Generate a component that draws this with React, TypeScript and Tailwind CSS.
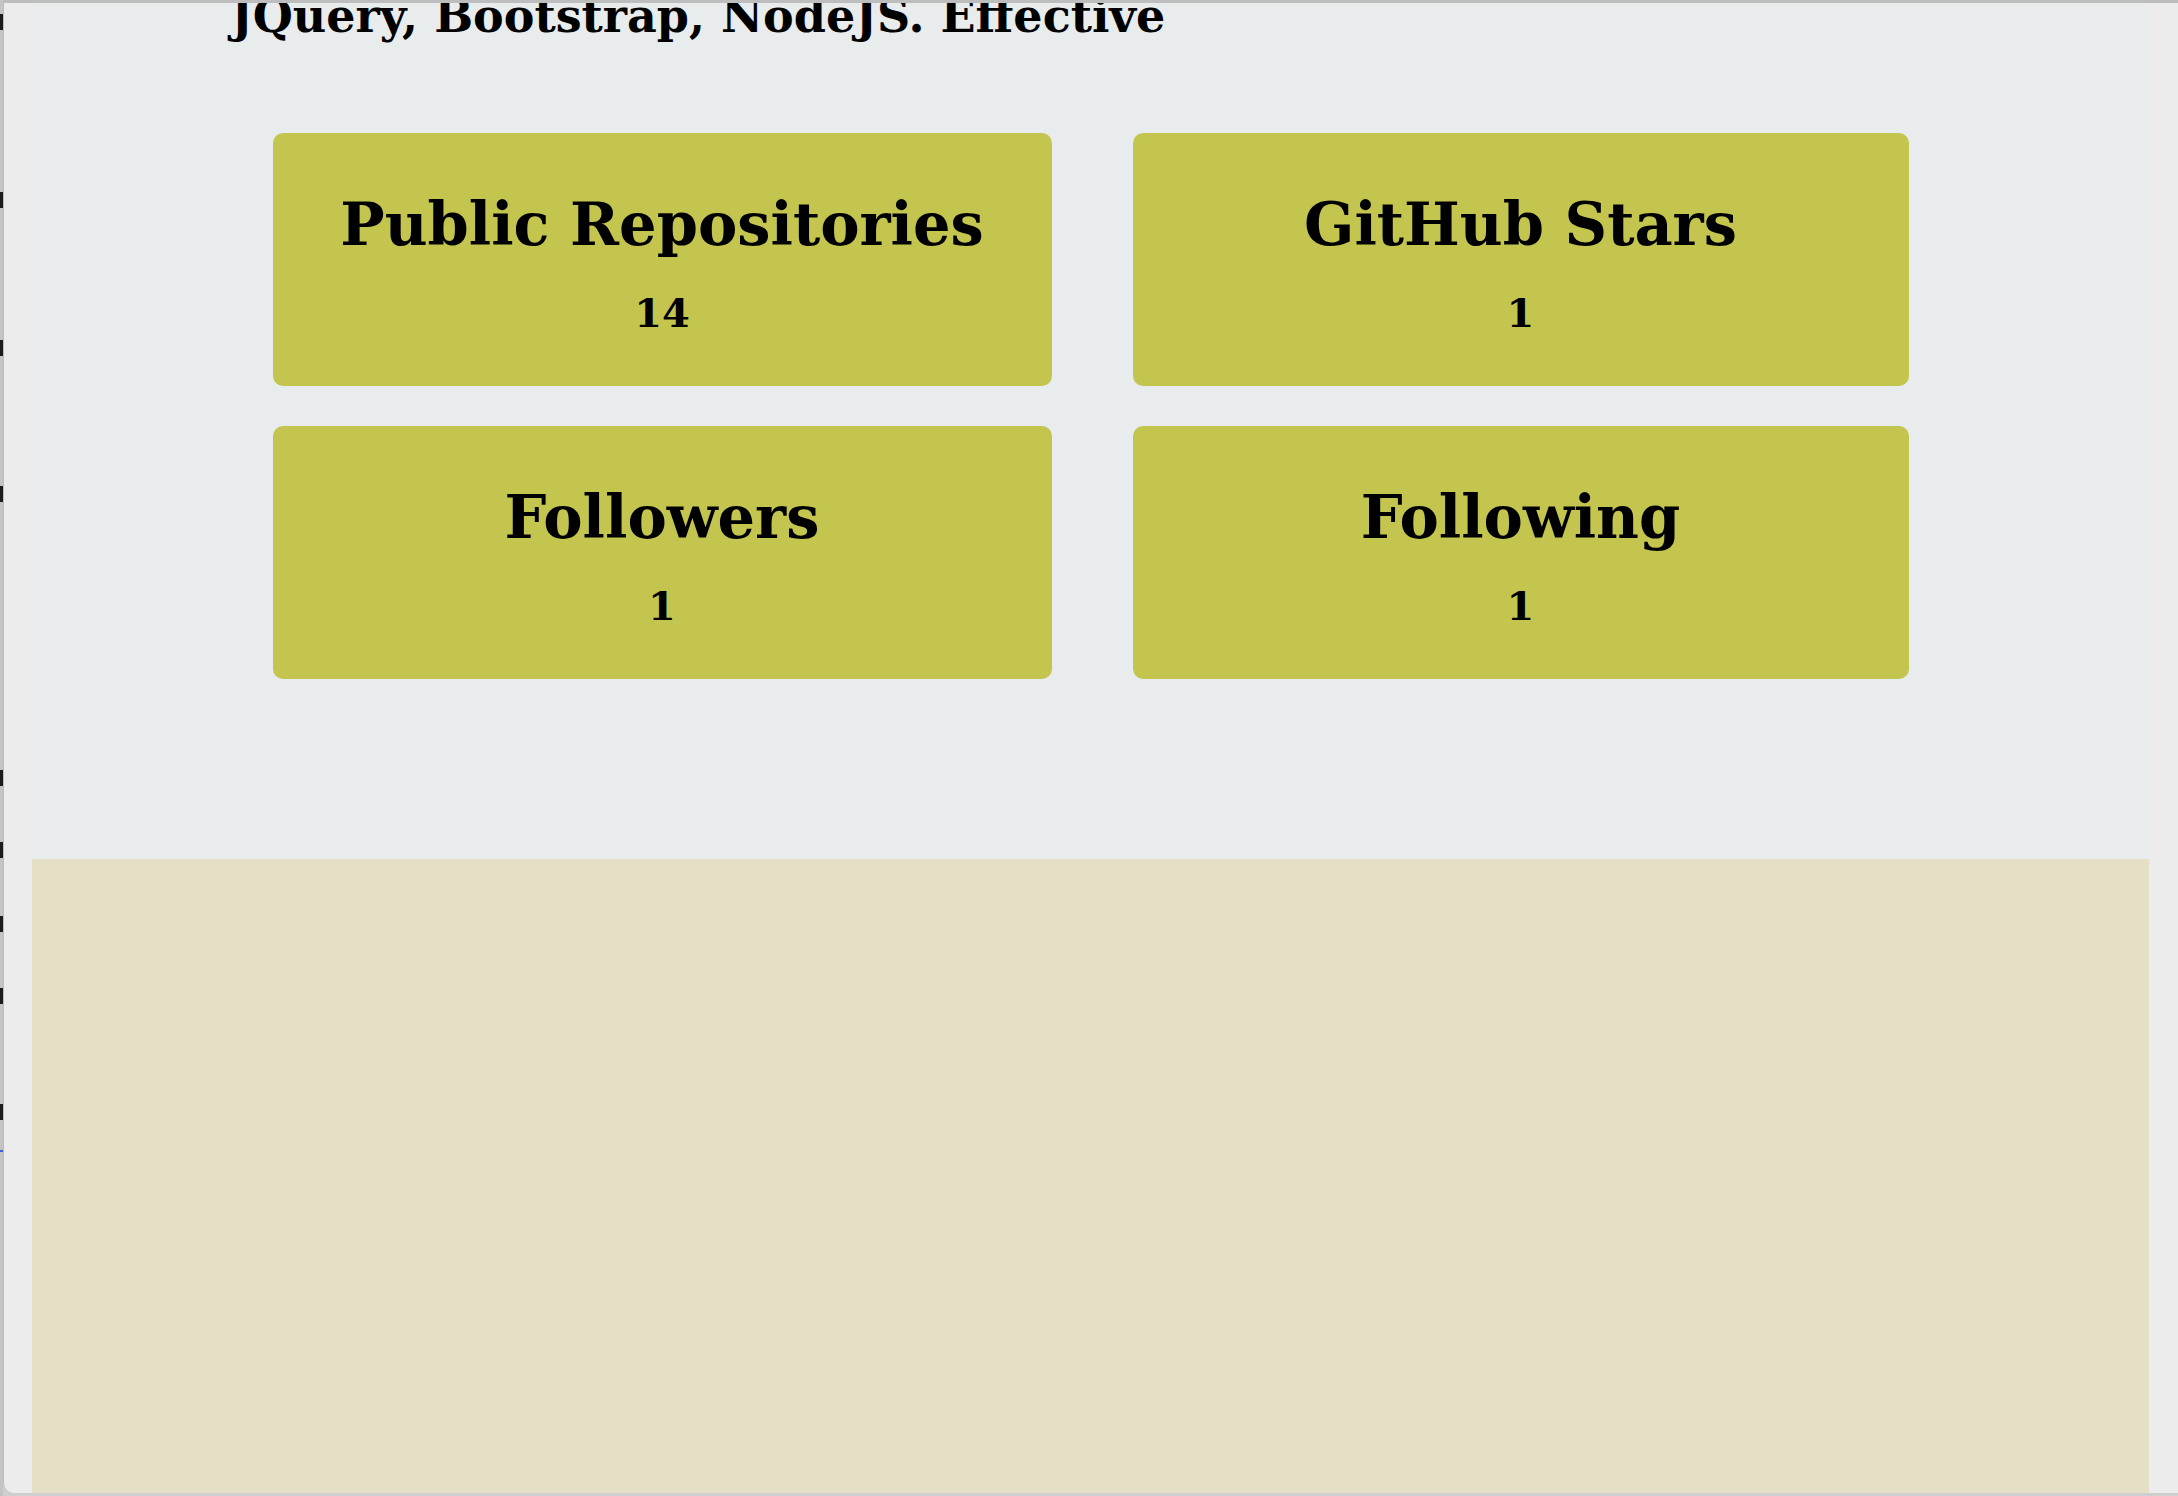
import React from "react";

/*
  GITHUB STATS
  - final line of the intro paragraph (scrolled off the top)
  - 2x2 grid of stat cards
  - beige footer panel
*/

const stats = [
  { label: "Public Repositories", value: 14 },
  { label: "GitHub Stars", value: 1 },
  { label: "Followers", value: 1 },
  { label: "Following", value: 1 },
];

// bits of the window behind, peeking out on the left
const fragments = [14, 192, 340, 486, 770, 842, 916, 988, 1104];

const StatCard: React.FC<{ label: string; value: number }> = ({ label, value }) => {
  return (
    <div className="h-[253px] rounded-[10px] bg-[#c3c54f] flex flex-col items-center pt-[56px]">
      <h3 className="text-[59px] leading-[72px] font-bold text-black">{label}</h3>
      <p className="mt-[28px] text-[40px] leading-[48px] font-bold text-black">{value}</p>
    </div>
  );
};

const App: React.FC = () => {
  return (
    <div
      className="flex h-[1496px] w-[2178px] overflow-hidden bg-[#cfcfcf]"
      style={{ fontFamily: '"DejaVu Serif", "Liberation Serif", serif' }}
    >
      {/* window behind */}
      <div className="relative w-[3px] shrink-0 bg-[#c4c4c4]">
        {fragments.map((top) => (
          <div key={top} className="absolute left-0 h-[16px] w-[3px] bg-[#1c1c1c]" style={{ top }} />
        ))}
        <div className="absolute left-0 top-[1150px] h-[2px] w-[3px] bg-[#3b62d8]" />
      </div>

      {/* browser window */}
      <div className="h-[1493px] flex-1 flex flex-col overflow-hidden rounded-bl-[10px] border-t-[3px] border-l border-[#bdbdbd] bg-[#ececec] pl-[28px] pr-[29px]">
        <main className="flex-1 flex flex-col bg-[#e8eced]">
          {/* TEXTO */}
          <p className="-mt-[10px] pl-[199px] text-[46px] leading-[46px] font-bold text-black whitespace-nowrap">
            JQuery, Bootstrap, NodeJS. Effective
          </p>

          {/* TARJETAS */}
          <div className="mt-[94px] mx-auto w-[1636px] grid grid-cols-[779px_776px] gap-x-[81px] gap-y-[40px]">
            {stats.map((s) => (
              <StatCard key={s.label} label={s.label} value={s.value} />
            ))}
          </div>

          {/* PIE */}
          <div className="mt-[180px] flex-1 bg-[#e5dfc6]" />
        </main>
      </div>
    </div>
  );
};

export default App;
